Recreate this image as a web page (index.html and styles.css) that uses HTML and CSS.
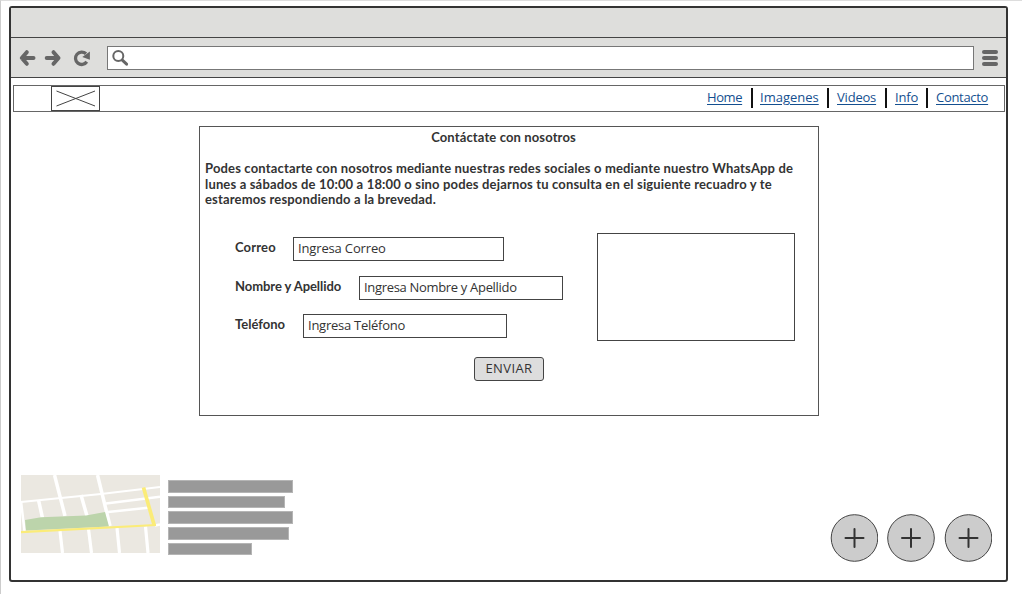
FILE: index.html
```html
<!DOCTYPE html>
<html lang="es">
<head>
<meta charset="utf-8">
<title>Contacto</title>
<link rel="stylesheet" href="styles.css">
</head>
<body>
<div class="browser">
  <div class="titlebar"></div>
  <div class="toolbar">
    <svg class="controls" width="96" height="38" viewBox="11 38 96 38">
      <g fill="none" stroke="#666" stroke-width="4" stroke-linecap="round" stroke-linejoin="round">
        <path d="M33.500 58H22M26.800 52.200 21.800 58l5 5.800"/>
        <path d="M46.700 58h11.500M53.500 52.200l5 5.800-5 5.800"/>
        <path d="M86 53.800A6.200 6.200 0 1 0 86.800 61.800" stroke-width="3.300" stroke-linecap="butt"/>
      </g>
      <path d="M89.900 51.500v8.300l-7.600-2.800z" fill="#666"/>
    </svg>
    <div class="address">
      <svg width="20" height="20" viewBox="110 48 20 20" fill="none" stroke="#666">
        <circle cx="118.300" cy="56" r="5" stroke-width="2"/>
        <path d="M122.300 60.200l4.300 4" stroke-width="3" stroke-linecap="round"/>
      </svg>
    </div>
    <div class="menu"><i></i><i></i><i></i></div>
  </div>
  <nav class="nav">
    <svg class="logo" width="49" height="25" viewBox="0 0 49 25" fill="none" stroke="#444">
      <rect x=".5" y=".5" width="48" height="24" fill="#fff"/>
      <path d="M5.500 5l38.500 15M5.500 20 44 5"/>
    </svg>
    <div class="links">
      <a class="l-home">Home</a><a class="l-img">Imagenes</a><a class="l-vid">Videos</a><a class="l-info">Info</a><a class="l-con">Contacto</a>
    </div>
  </nav>
  <main class="panel">
    <h1>Contáctate con nosotros</h1>
    <p class="intro">Podes contactarte con nosotros mediante nuestras redes sociales o mediante nuestro WhatsApp de<br>lunes a sábados de 10:00 a 18:00 o sino podes dejarnos tu consulta en el siguiente recuadro y te<br>estaremos respondiendo a la brevedad.</p>
    <div class="form">
      <div class="fields">
        <div class="row correo"><label>Correo</label><div class="input">Ingresa Correo</div></div>
        <div class="row nombre"><label>Nombre y Apellido</label><div class="input">Ingresa Nombre y Apellido</div></div>
        <div class="row telefono"><label>Teléfono</label><div class="input">Ingresa Teléfono</div></div>
      </div>
      <div class="textarea"></div>
    </div>
    <div class="button">ENVIAR</div>
  </main>
  <footer class="footer">
    <svg class="map" width="139" height="78" viewBox="0 0 139 78" fill="none" stroke="#fff" stroke-width="2.500">
      <rect width="139" height="78" fill="#ebe8e1" stroke="none"/>
      <path d="M0 27 80 19 139 12" stroke-width="2.200"/>
      <path d="M33.500 0 44 41M76.500 0 89 51M17.500 25 21.500 43M60 20 66 41" stroke-width="3.500"/>
      <path d="M0 26 3.500 56M85 28.500 139 21.800M87 37 127 32.800M134 50.500 139 49.500"/>
      <path d="M39 56 41.500 78M67.500 54 70.500 78M96 53 98.500 78M124.500 51.500 127 78" stroke-width="3.200"/>
      <path d="M4 45 20 42.200 65 40.500 84 37 88 51.500 5 55.500z" fill="#bcd4ab" stroke="none"/>
      <path d="M0 57.200 135 50" stroke="#fbec78" stroke-width="2.200"/>
      <path d="M122.500 12.500 133.300 50.500" stroke="#fbec78" stroke-width="3.700"/>
    </svg>
    <div class="bars"><i class="b1"></i><i class="b2"></i><i class="b3"></i><i class="b4"></i><i class="b5"></i></div>
    <div class="circles">
      <svg width="48" height="48" viewBox="0 0 48 48"><circle cx="24.500" cy="24" r="23.300"/><path d="M24.500 15v18M15.500 24h18"/></svg>
      <svg width="48" height="48" viewBox="0 0 48 48"><circle cx="24" cy="24" r="23.300"/><path d="M24 15v18M15 24h18"/></svg>
      <svg width="48" height="48" viewBox="0 0 48 48"><circle cx="24.500" cy="24" r="23.300"/><path d="M24.500 15v18M15.500 24h18"/></svg>
    </div>
  </footer>
</div>
</body>
</html>
```
FILE: styles.css
```css
* { box-sizing: border-box; }
body {
  margin: 0;
  width: 1022px;
  height: 594px;
  padding: 5px 14px 12px 8px;
  border-top: 1px solid #ddd;
  border-left: 1px solid #ccc;
  background: #fff;
  color: #333;
  font: 13px/16px "Open Sans", sans-serif;
  overflow: hidden;
}
svg { display: block; flex: none; }
.browser {
  height: 576px;
  border: 2px solid #333;
  border-radius: 3px;
  display: flex;
  flex-direction: column;
}
.titlebar { height: 30px; background: #dededc; border-bottom: 1px solid #444; }
.toolbar {
  height: 40px;
  display: flex;
  background: #dededc;
  border-bottom: 1px solid #444;
}
.address {
  width: 867px;
  height: 24px;
  margin-top: 8px;
  padding: 1px 2px;
  border: 1px solid #777;
  background: #fff;
}
.menu { display: flex; flex-direction: column; gap: 2px; margin: 12px 0 0 8px; }
.menu i { width: 16px; height: 4px; border-radius: 2px; background: #666; }
.nav {
  height: 27px;
  margin: 7px 1px 0 2px;
  border: 1px solid #666;
  display: flex;
  justify-content: space-between;
}
.logo { margin-left: 37px; }
.links { display: flex; align-items: center; height: 24px; white-space: nowrap; }
.links a {
  color: #144f8f;
  text-decoration: underline;
  text-underline-offset: 2px;
  height: 20px;
  line-height: 18px;
  padding-left: 8px;
  border-left: 2px solid #111;
  letter-spacing: -0.200px;
}
.links .l-home { width: 44px; padding: 0; border: 0; letter-spacing: -0.400px; }
.links .l-img { width: 76px; padding-left: 7px; letter-spacing: 0; }
.l-vid { width: 58px; }
.l-info { width: 41px; }
.links .l-con { width: 78px; letter-spacing: -0.300px; }
.panel {
  width: 620px;
  height: 290px;
  margin: 14px 0 0 188px;
  border: 1px solid #555;
}
h1 {
  margin: 1px 0 0;
  padding-right: 11px;
  font: 700 13px/18px Lato, sans-serif;
  letter-spacing: 0.130px;
  text-align: center;
}
.intro {
  margin: 15px 0 0;
  padding-left: 5px;
  font: 700 13px/15.600px Lato, sans-serif;
  letter-spacing: 0.160px;
  white-space: nowrap;
}
.form { display: flex; justify-content: space-between; margin: 25px 23px 0 35px; }
.fields { display: flex; flex-direction: column; gap: 15px; padding-top: 4px; }
.row { display: flex; white-space: nowrap; }
.row label { font-family: Lato, sans-serif; font-weight: 700; line-height: 21px; }
.input { height: 24px; padding-left: 4px; border: 1px solid #444; line-height: 21px; }
.correo label { width: 58px; letter-spacing: 0.150px; }
.correo .input { width: 211px; letter-spacing: -0.150px; }
.nombre label { width: 124px; letter-spacing: -0.060px; }
.nombre .input { width: 204px; letter-spacing: -0.320px; }
.telefono { margin-top: -1px; }
.telefono label { width: 68px; }
.telefono .input { width: 204px; letter-spacing: -0.250px; }
.textarea { width: 198px; height: 108px; border: 1px solid #444; }
.button {
  width: 70px;
  height: 24px;
  margin: 16px 0 0 274px;
  border: 1px solid #444;
  border-radius: 3px;
  background: #ddd;
  line-height: 21px;
  text-align: center;
  letter-spacing: 0.400px;
}
.footer { display: flex; align-items: flex-start; padding: 59px 14px 0 10px; }
.bars { display: flex; flex-direction: column; gap: 3px; margin: 5px 0 0 8px; width: 126px; }
.bars i { height: 12.700px; background: #999; border: 1px solid #b5b5b5; }
.b1, .b3 { width: 125px; }
.b2 { width: 117px; }
.b4 { width: 121px; }
.b5 { width: 84px; }
.circles { display: flex; gap: 9px; margin: 39px 0 0 auto; }
.circles circle { fill: #ccc; stroke: #444; }
.circles path { stroke: #333; stroke-width: 2; stroke-linecap: round; }
```
